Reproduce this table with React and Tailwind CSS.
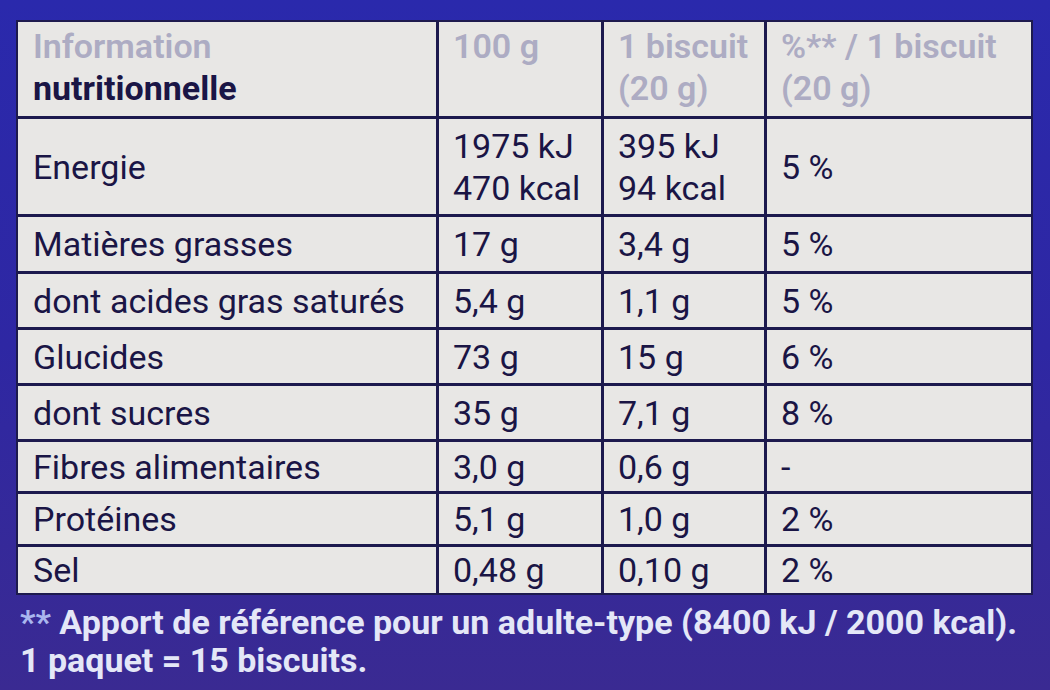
import React from "react";

const ROWS = [
  { label: "Energie", per100: ["1975 kJ", "470 kcal"], perBiscuit: ["395 kJ", "94 kcal"], pct: "5 %" },
  { label: "Matières grasses", per100: ["17 g"], perBiscuit: ["3,4 g"], pct: "5 %" },
  { label: "dont acides gras saturés", per100: ["5,4 g"], perBiscuit: ["1,1 g"], pct: "5 %" },
  { label: "Glucides", per100: ["73 g"], perBiscuit: ["15 g"], pct: "6 %" },
  { label: "dont sucres", per100: ["35 g"], perBiscuit: ["7,1 g"], pct: "8 %" },
  { label: "Fibres alimentaires", per100: ["3,0 g"], perBiscuit: ["0,6 g"], pct: "-" },
  { label: "Protéines", per100: ["5,1 g"], perBiscuit: ["1,0 g"], pct: "2 %" },
  { label: "Sel", per100: ["0,48 g"], perBiscuit: ["0,10 g"], pct: "2 %" },
];

const Cell = ({ children, first = false, top = false }) => (
  <div
    className={`bg-[#e8e7e5] flex flex-col ${top ? "justify-start pt-[3px]" : "justify-center"} ${
      first ? "pl-[15px]" : "pl-[14px]"
    } leading-[42px] whitespace-nowrap`}
  >
    {children}
  </div>
);

export default function App() {
  return (
    <div
      className="w-full h-[690px] overflow-hidden bg-linear-to-b from-[#2a29ac] via-[#2e27a3] to-[#3a2a92] pt-[20px] pl-[16px]"
      style={{ fontFamily: "Roboto, 'Liberation Sans', sans-serif" }}
    >
      {/* Table */}
      <div className="w-[1017px] grid grid-cols-[418px_162px_160px_264px] grid-rows-[94px_95px_54px_53px_53px_53px_49px_50px_46px] gap-[3px] p-[2px] bg-[#1d1a4e] text-[34px] text-[#1a1545]">
        <Cell first top>
          <span className="font-semibold text-[#adacc3]">Information</span>
          <span className="font-bold text-[#1a1545]">nutritionnelle</span>
        </Cell>
        <Cell top>
          <span className="font-semibold text-[#adacc3]">100 g</span>
        </Cell>
        <Cell top>
          <span className="font-semibold text-[#adacc3]">1 biscuit</span>
          <span className="font-semibold text-[#adacc3]">(20 g)</span>
        </Cell>
        <Cell top>
          <span className="font-semibold text-[#adacc3]">%** / 1 biscuit</span>
          <span className="font-semibold text-[#adacc3]">(20 g)</span>
        </Cell>

        {ROWS.map((r) => (
          <React.Fragment key={r.label}>
            <Cell first>
              <span>{r.label}</span>
            </Cell>
            <Cell>
              {r.per100.map((v) => (
                <span key={v}>{v}</span>
              ))}
            </Cell>
            <Cell>
              {r.perBiscuit.map((v) => (
                <span key={v}>{v}</span>
              ))}
            </Cell>
            <Cell>
              <span>{r.pct}</span>
            </Cell>
          </React.Fragment>
        ))}
      </div>

      {/* Footnote */}
      <div className="mt-[8px] pl-[4px] text-[34px] leading-[38px] font-bold text-[#e4e7f7] whitespace-nowrap">
        <p>
          <span className="text-[#a9b6ee]">**</span> Apport de référence pour un adulte-type (8400 kJ / 2000 kcal).
        </p>
        <p>1 paquet = 15 biscuits.</p>
      </div>
    </div>
  );
}
